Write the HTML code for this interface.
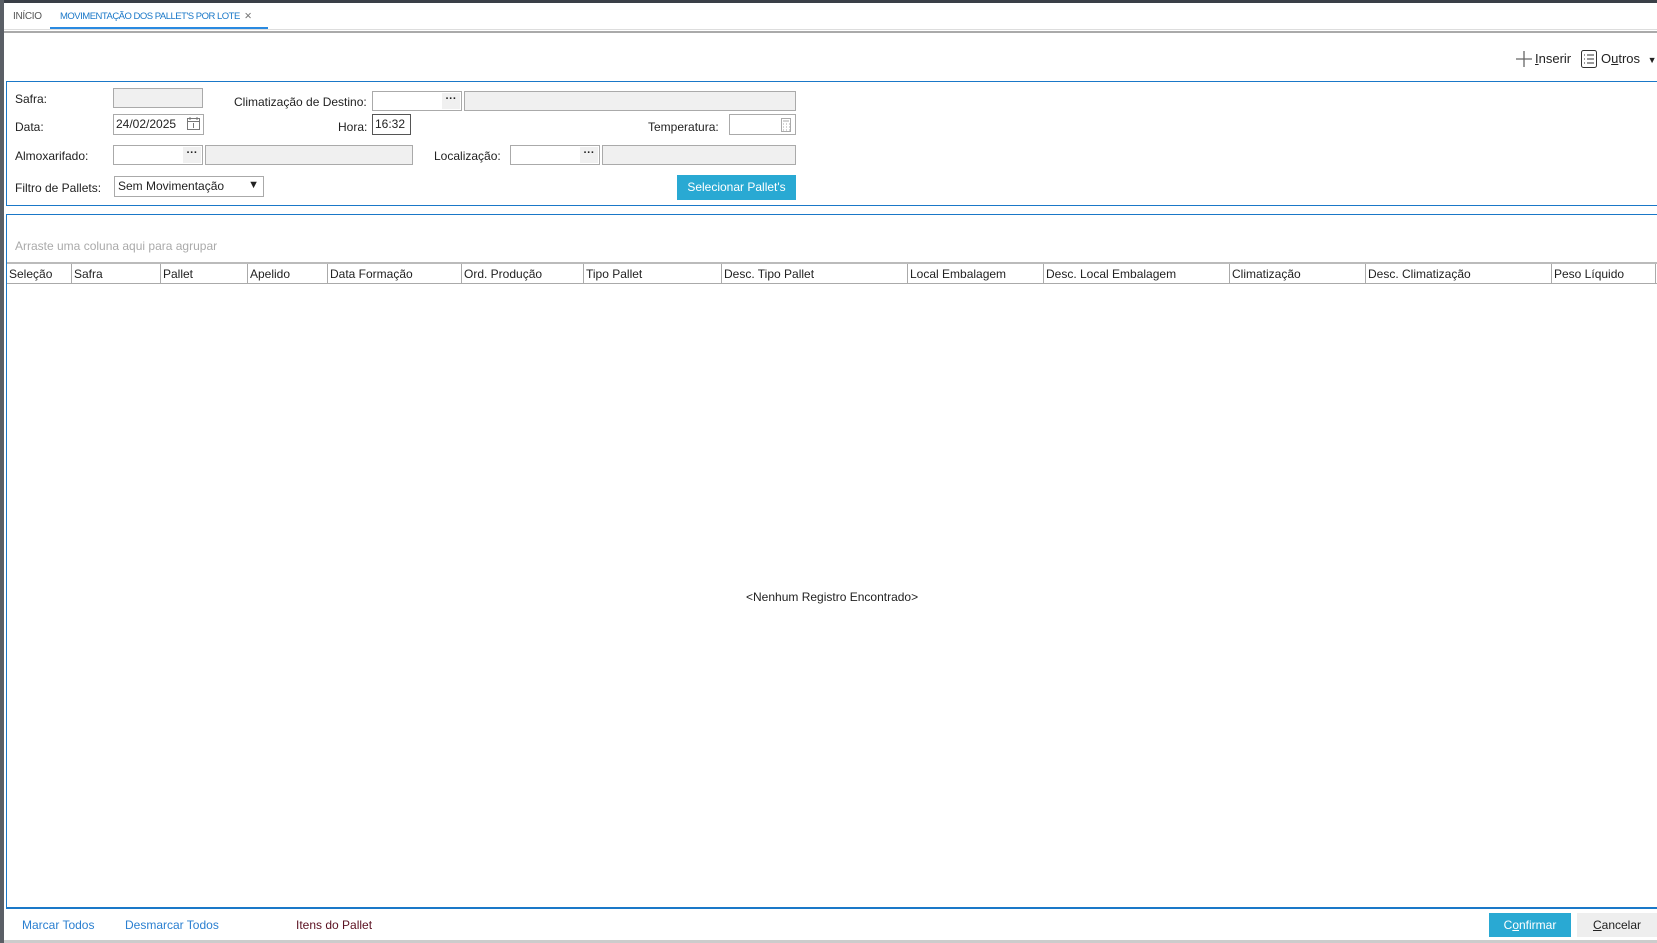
<!DOCTYPE html>
<html><head><meta charset="utf-8"><style>
*{box-sizing:border-box;margin:0;padding:0}
body{width:1657px;height:943px;background:#fff;font-family:"Liberation Sans",sans-serif;font-size:12px;color:#222;position:relative;overflow:hidden}
.a{position:absolute;white-space:nowrap}
.inp{position:absolute;border:1px solid #aaa;background:#fff}
.gray{position:absolute;border:1px solid #aaa;background:#f0f0f0}
.dots{position:absolute;right:1px;top:1px;bottom:1px;width:18px;background:#f0f0f0;font-weight:bold;text-align:center;line-height:12px;font-size:11px}
.hd{position:absolute;top:264px;height:20px;border-right:1px solid #aaa;padding-left:2px;line-height:20px}
</style></head><body>
<div class="a" style="left:0;top:0;width:1657px;height:3px;background:#3a3f47"></div>
<div class="a" style="left:0;top:0;width:4px;height:943px;background:#5a5f66"></div>
<div class="a" style="left:13px;top:11px;font-size:10px;color:#555;letter-spacing:-0.3px">INÍCIO</div>
<div class="a" style="left:60px;top:11px;font-size:9.5px;color:#1a78c8;letter-spacing:-0.5px">MOVIMENTAÇÃO DOS PALLET'S POR LOTE&nbsp;&nbsp;<span style="color:#777">✕</span></div>
<div class="a" style="left:50px;top:27px;width:218px;height:2px;background:#2a8ae0"></div>
<div class="a" style="left:4px;top:29px;width:1653px;height:1px;background:#ddd"></div>
<div class="a" style="left:4px;top:31px;width:1653px;height:2px;background:#aaa"></div>
<svg class="a" style="left:1516px;top:51px" width="16" height="16"><path d="M8 0V16M0 8H16" stroke="#666" stroke-width="1.3"/></svg>
<div class="a" style="left:1535px;top:51px;font-size:13px;color:#222"><u>I</u>nserir</div>
<svg class="a" style="left:1581px;top:50px" width="16" height="18"><rect x="0.5" y="0.5" width="15" height="17" rx="2" fill="none" stroke="#333"/><path d="M3 5h1M6 5h7M3 9h1M6 9h7M3 13h1M6 13h7" stroke="#333"/></svg>
<div class="a" style="left:1601px;top:51px;font-size:13px">O<u>u</u>tros <span style="font-size:9px;margin-left:4px">▼</span></div>

<div class="a" style="left:6px;top:81px;width:1651px;height:125px;border:1px solid #1a78c8;border-right:none"></div>
<div class="a" style="left:15px;top:92px">Safra:</div>
<div class="gray" style="left:113px;top:88px;width:90px;height:20px"></div>
<div class="a" style="left:234px;top:95px">Climatização de Destino:</div>
<div class="inp" style="left:372px;top:91px;width:90px;height:20px"><div class="dots">···</div></div>
<div class="gray" style="left:464px;top:91px;width:332px;height:20px"></div>
<div class="a" style="left:15px;top:120px">Data:</div>
<div class="inp" style="left:113px;top:114px;width:91px;height:21px;padding:2px 2px;font-size:12px">24/02/2025</div>
<svg class="a" style="left:187px;top:117px" width="13" height="13"><rect x="0.5" y="1.5" width="12" height="11" fill="none" stroke="#777"/><path d="M0 4.5H13M3 0v3M10 0v3M6.5 6v5" stroke="#777"/></svg>
<div class="a" style="left:338px;top:120px">Hora:</div>
<div class="inp" style="left:372px;top:114px;width:39px;height:21px;border-color:#555;padding:2px 2px">16:32</div>
<div class="a" style="left:648px;top:120px">Temperatura:</div>
<div class="inp" style="left:729px;top:114px;width:67px;height:21px"><svg class="a" style="right:4px;top:3px" width="10" height="14"><rect x="0.5" y="0.5" width="9" height="13" fill="none" stroke="#aaa"/><path d="M2 3h6M2 6h1M5 6h1M8 6h1M2 9h1M5 9h1M8 9h1M2 12h1M5 12h1M8 12h1" stroke="#aaa"/></svg></div>
<div class="a" style="left:15px;top:149px">Almoxarifado:</div>
<div class="inp" style="left:113px;top:145px;width:90px;height:20px"><div class="dots">···</div></div>
<div class="gray" style="left:205px;top:145px;width:208px;height:20px"></div>
<div class="a" style="left:434px;top:149px">Localização:</div>
<div class="inp" style="left:510px;top:145px;width:90px;height:20px"><div class="dots">···</div></div>
<div class="gray" style="left:602px;top:145px;width:194px;height:20px"></div>
<div class="a" style="left:15px;top:181px">Filtro de Pallets:</div>
<div class="inp" style="left:114px;top:176px;width:150px;height:21px;padding:2px 3px">Sem Movimentação<span class="a" style="right:4px;top:2px;font-size:11px">▼</span></div>
<div class="a" style="left:677px;top:175px;width:119px;height:25px;background:#29a9d3;color:#fff;text-align:center;line-height:25px">Selecionar Pallet's</div>

<div class="a" style="left:6px;top:214px;width:1651px;height:695px;border:1px solid #1a78c8;border-right:none;border-bottom:2px solid #1a78c8"></div>
<div class="a" style="left:15px;top:239px;color:#aaa">Arraste uma coluna aqui para agrupar</div>
<div class="a" style="left:7px;top:262px;width:1650px;height:2px;background:#bbb"></div>
<div class="a" style="left:7px;top:283px;width:1650px;height:1px;background:#aaa"></div>
<div class="hd" style="left:7px;width:65px">Seleção</div>
<div class="hd" style="left:72px;width:89px">Safra</div>
<div class="hd" style="left:161px;width:87px">Pallet</div>
<div class="hd" style="left:248px;width:80px">Apelido</div>
<div class="hd" style="left:328px;width:134px">Data Formação</div>
<div class="hd" style="left:462px;width:122px">Ord. Produção</div>
<div class="hd" style="left:584px;width:138px">Tipo Pallet</div>
<div class="hd" style="left:722px;width:186px">Desc. Tipo Pallet</div>
<div class="hd" style="left:908px;width:136px">Local Embalagem</div>
<div class="hd" style="left:1044px;width:186px">Desc. Local Embalagem</div>
<div class="hd" style="left:1230px;width:136px">Climatização</div>
<div class="hd" style="left:1366px;width:186px">Desc. Climatização</div>
<div class="hd" style="left:1552px;width:104px">Peso Líquido</div>
<div class="a" style="left:746px;top:590px">&lt;Nenhum Registro Encontrado&gt;</div>

<div class="a" style="left:22px;top:918px;color:#2a7fd0">Marcar Todos</div>
<div class="a" style="left:125px;top:918px;color:#2a7fd0">Desmarcar Todos</div>
<div class="a" style="left:296px;top:918px;color:#5a1020">Itens do Pallet</div>
<div class="a" style="left:1489px;top:913px;width:82px;height:24px;background:#29a9d3;color:#fff;text-align:center;line-height:24px">C<u>o</u>nfirmar</div>
<div class="a" style="left:1577px;top:913px;width:80px;height:24px;background:#eee;color:#222;text-align:center;line-height:24px"><u>C</u>ancelar</div>
<div class="a" style="left:4px;top:940px;width:1653px;height:3px;background:#ccc"></div>
</body></html>
